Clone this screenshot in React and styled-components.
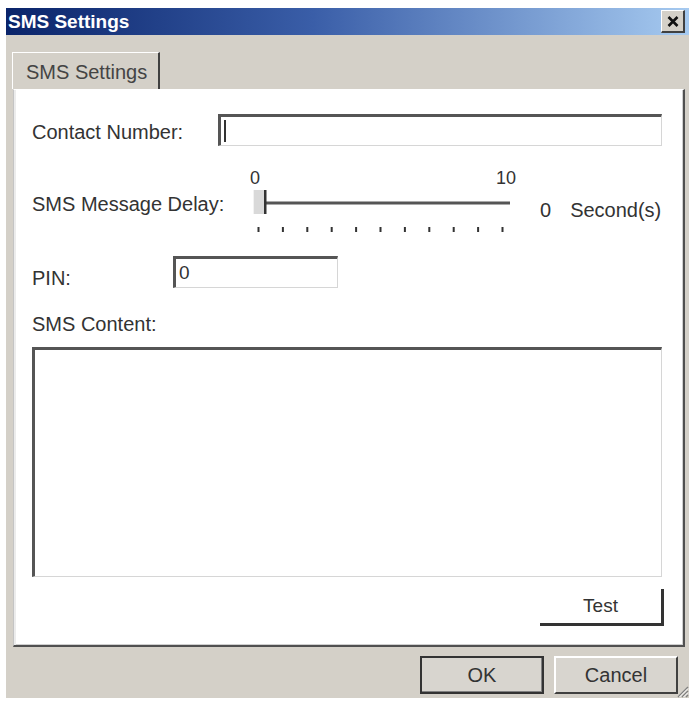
import React from 'react'
import styled, { createGlobalStyle } from 'styled-components'

const Global = createGlobalStyle`
  html, body {
    margin: 0;
    padding: 0;
    background: #ffffff;
  }
  * {
    box-sizing: border-box;
  }
`

const ink = '#333333'
const face = '#d4d0c8'
const dark = '#404040'

const Window = styled.div`
  position: relative;
  display: flex;
  flex-direction: column;
  width: 683px;
  height: 690px;
  margin: 8px 0 0 6px;
  background: ${face};
  font-family: "Liberation Sans", Arial, sans-serif;
  color: ${ink};
`

const TitleBar = styled.div`
  display: flex;
  align-items: center;
  justify-content: space-between;
  height: 27px;
  padding: 0 4px 0 2px;
  background: linear-gradient(90deg, #0a246a 0%, #3a5ea8 45%, #a6caf0 100%);
`

const Title = styled.span`
  color: #ffffff;
  font-weight: bold;
  font-size: 19px;
  line-height: 22px;
`

const CloseButton = styled.div`
  display: flex;
  align-items: center;
  justify-content: center;
  width: 24px;
  height: 23px;
  background: ${face};
  border-top: 1px solid #ffffff;
  border-left: 1px solid #ffffff;
  border-right: 2px solid ${dark};
  border-bottom: 2px solid ${dark};
`

const Body = styled.div`
  display: flex;
  flex-direction: column;
  padding: 17px 4px 0 7px;
`

const TabStrip = styled.div`
  display: flex;
  height: 37px;
`

const Tab = styled.div`
  width: 148px;
  height: 37px;
  margin-left: -1px;
  padding: 8px 0 0 13px;
  border-top: 1px solid #ffffff;
  border-left: 1px solid #ffffff;
  border-right: 2px solid ${dark};
  font-size: 20px;
  line-height: 23px;
  color: #444444;
`

const Panel = styled.div`
  display: flex;
  flex-direction: column;
  height: 558px;
  padding: 24px 21px 0 18px;
  background: #ffffff;
  border-top: 1px solid #ffffff;
  border-left: 1px solid #c4c4c4;
  border-right: 2px solid #505050;
  border-bottom: 2px solid #505050;
  box-shadow: inset 2px 0 0 #ececec, inset -1px -1px 0 #cfcfcf;
`

const Row = styled.div`
  display: flex;
  align-items: flex-start;
  height: ${p => p.h}px;
  margin-top: ${p => p.gap || 0}px;
`

const Label = styled.div`
  flex: none;
  width: ${p => p.w}px;
  margin-top: ${p => p.top || 0}px;
  font-size: 20px;
  line-height: 23px;
  white-space: nowrap;
`

const TextBox = styled.div`
  display: flex;
  align-items: center;
  flex: ${p => (p.w ? 'none' : '1')};
  width: ${p => (p.w ? `${p.w}px` : 'auto')};
  height: 32px;
  padding-left: 3px;
  background: #ffffff;
  border-top: 3px solid #555555;
  border-left: 3px solid #555555;
  border-right: 1px solid #d6d6d6;
  border-bottom: 1px solid #d6d6d6;
  font-size: 19px;
`

const Caret = styled.span`
  width: 2px;
  height: 22px;
  background: #333333;
`

const SliderBox = styled.div`
  display: flex;
  flex-direction: column;
  width: 266px;
`

const ScaleLabels = styled.div`
  display: flex;
  justify-content: space-between;
  height: 22px;
  padding-top: 2px;
  font-size: 18px;
  line-height: 20px;
`

const ValueText = styled.div`
  display: flex;
  gap: 19px;
  margin: 33px 0 0 24px;
  font-size: 20px;
  line-height: 23px;
`

const ContentLabel = styled(Label)`
  margin-top: 25px;
`

const ContentArea = styled.div`
  height: 230px;
  margin-top: 11px;
  background: #ffffff;
  border-top: 3px solid #555555;
  border-left: 3px solid #555555;
  border-right: 1px solid #d6d6d6;
  border-bottom: 1px solid #d6d6d6;
`

const TestRow = styled.div`
  display: flex;
  justify-content: flex-end;
  margin: 12px -2px 0 0;
`

const FlatButton = styled.div`
  display: flex;
  align-items: center;
  justify-content: center;
  width: 124px;
  height: 37px;
  background: #ffffff;
  border-right: 3px solid #333333;
  border-bottom: 3px solid #333333;
  font-size: 19px;
`

const Footer = styled.div`
  display: flex;
  flex: 1;
  justify-content: flex-end;
  align-items: flex-start;
  gap: 10px;
  padding: 9px 11px 0 0;
`

const Button = styled.div`
  display: flex;
  align-items: center;
  justify-content: center;
  width: 124px;
  height: 38px;
  background: #d8d5cf;
  font-size: 20px;
  border: 2px solid;
  border-color: ${p => (p.primary ? '#333333' : `#ffffff ${dark} ${dark} #ffffff`)};
  box-shadow: ${p => (p.primary ? 'inset -1px -1px 0 #808080' : 'none')};
`

const Grip = styled.svg`
  position: absolute;
  right: 0;
  bottom: 0;
`

const Slider = () => {
  const ticks = Array.from({ length: 11 }, (_, i) => 7.5 + i * 24.4)
  return (
    <svg width="262" height="46">
      <rect x="16" y="13.5" width="244" height="3" fill="#555555" />
      <rect x="3" y="2" width="12" height="24" fill="#d9d9d9" />
      <rect x="3" y="2" width="1" height="24" fill="#f2f2f2" />
      <rect x="14" y="2" width="2.5" height="24" fill="#333333" />
      {ticks.map(x => (
        <rect key={x} x={x} y="39" width="2" height="5" fill="#333333" />
      ))}
    </svg>
  )
}

const App = () => (
  <>
    <Global />
    <Window>
      <TitleBar>
        <Title>SMS Settings</Title>
        <CloseButton>
          <svg width="12" height="11" viewBox="0 0 12 11">
            <path d="M1.5 1 L10.5 10 M10.5 1 L1.5 10" stroke="#111111" strokeWidth="2.6" />
          </svg>
        </CloseButton>
      </TitleBar>
      <Body>
        <TabStrip>
          <Tab>SMS Settings</Tab>
        </TabStrip>
        <Panel>
          <Row h={32}>
            <Label w={186} top={7}>Contact Number:</Label>
            <TextBox><Caret /></TextBox>
          </Row>
          <Row h={70} gap={20}>
            <Label w={218} top={27}>SMS Message Delay:</Label>
            <SliderBox>
              <ScaleLabels>
                <span>0</span>
                <span>10</span>
              </ScaleLabels>
              <Slider />
            </SliderBox>
            <ValueText>
              <span>0</span>
              <span>Second(s)</span>
            </ValueText>
          </Row>
          <Row h={32} gap={20}>
            <Label w={141} top={11}>PIN:</Label>
            <TextBox w={165}>0</TextBox>
          </Row>
          <ContentLabel>SMS Content:</ContentLabel>
          <ContentArea />
          <TestRow>
            <FlatButton>Test</FlatButton>
          </TestRow>
        </Panel>
      </Body>
      <Footer>
        <Button primary>OK</Button>
        <Button>Cancel</Button>
      </Footer>
      <Grip width="14" height="14" viewBox="0 0 14 14">
        <path d="M13 3 L3 13 M13 7 L7 13 M13 11 L11 13" stroke="#808080" strokeWidth="1.4" />
        <path d="M13 4.5 L4.5 13 M13 8.5 L8.5 13" stroke="#ffffff" strokeWidth="1" />
      </Grip>
    </Window>
  </>
)

export default App
